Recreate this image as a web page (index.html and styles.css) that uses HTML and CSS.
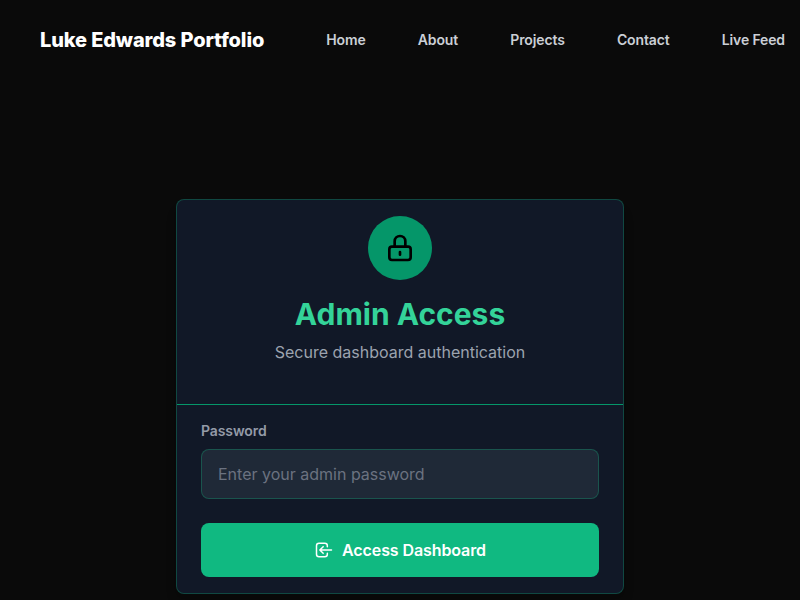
FILE: index.html
```html
<!DOCTYPE html>
<html lang="en">
<head>
<meta charset="utf-8">
<title>Admin Access</title>
<link rel="stylesheet" href="styles.css">
</head>
<body>
<header class="navbar">
  <a class="brand">Luke Edwards Portfolio</a>
  <nav class="links">
    <a>Home</a><a>About</a><a>Projects</a><a>Contact</a><a>Live Feed</a>
  </nav>
</header>
<main class="page">
  <section class="card">
    <div class="card-head">
      <div class="badge">
        <svg width="32" height="32" viewBox="0 0 24 24" fill="none" stroke="currentColor" stroke-width="2"><path d="M12 15v2m-6 4h12a2 2 0 002-2v-6a2 2 0 00-2-2H6a2 2 0 00-2 2v6a2 2 0 002 2zm10-10V7a4 4 0 00-8 0v4h8z" stroke-linecap="round" stroke-linejoin="round"/></svg>
      </div>
      <h1>Admin Access</h1>
      <p>Secure dashboard authentication</p>
    </div>
    <form class="card-body">
      <label for="password">Password</label>
      <input id="password" type="password" placeholder="Enter your admin password">
      <button type="button">
        <svg width="20" height="20" viewBox="0 0 24 24" fill="none" stroke="currentColor" stroke-width="1.8" stroke-linecap="round" stroke-linejoin="round"><path d="M11 16l-4-4m0 0l4-4m-4 4h14m-5 4v1a3 3 0 01-3 3H6a3 3 0 01-3-3V7a3 3 0 013-3h7a3 3 0 013 3v1"/></svg>
        <span>Access Dashboard</span>
      </button>
    </form>
  </section>
</main>
</body>
</html>
```
FILE: styles.css
```css
* { box-sizing: border-box; margin: 0; padding: 0; }
body {
  height: 600px;
  overflow: hidden;
  background: #0a0a0a;
  color: #fff;
  font-family: Inter, sans-serif;
  font-size: 16px;
  line-height: 24px;
}
.navbar {
  display: flex;
  align-items: center;
  height: 80px;
  padding-left: 40px;
  white-space: nowrap;
}
.brand { flex: none; width: 286.3px; font-size: 20px; font-weight: 800; letter-spacing: -0.13px; }
.links { display: flex; gap: 52.2px; font-size: 14px; font-weight: 600; letter-spacing: -0.13px; color: #cbcfd6; }
.page { display: flex; justify-content: center; padding-top: 119px; }
.card {
  width: 448px;
  height: 395px;
  border: 1px solid rgba(16, 185, 129, 0.3);
  border-radius: 8px;
  background: #111827;
  box-shadow: 0 10px 15px -3px rgba(0, 0, 0, 0.1), 0 4px 6px -4px rgba(0, 0, 0, 0.1);
}
.card-head {
  display: flex;
  flex-direction: column;
  align-items: center;
  height: 205px;
  padding-top: 16px;
  border-bottom: 1px solid #059669;
}
.badge {
  display: flex;
  align-items: center;
  justify-content: center;
  width: 64px;
  height: 64px;
  margin-bottom: 16px;
  border-radius: 50%;
  background: #059669;
  color: #000;
}
h1 { margin-bottom: 8px; font-size: 30px; font-weight: 700; line-height: 36px; color: #34d399; }
.card-head p { color: #9ca3af; }
.card-body { display: flex; flex-direction: column; padding: 16px 24px; }
label { margin-bottom: 8px; font-size: 14px; font-weight: 600; letter-spacing: -0.1px; line-height: 20px; color: #949ba7; }
input {
  height: 50px;
  margin-bottom: 24px;
  padding: 12px 16px;
  border: 1px solid rgba(16, 185, 129, 0.3);
  border-radius: 8px;
  background: #1f2937;
  color: #fff;
  font: inherit;
}
input::placeholder { color: #6b7280; opacity: 1; }
button {
  display: flex;
  align-items: center;
  justify-content: center;
  gap: 8px;
  height: 54px;
  border: 0;
  border-radius: 8px;
  background: #10b981;
  color: #fff;
  font: inherit;
  font-weight: 600;
  letter-spacing: -0.1px;
}
```
